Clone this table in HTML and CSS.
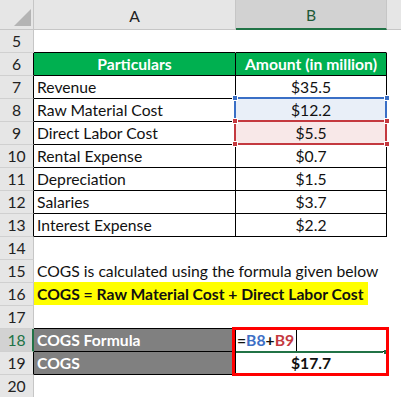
FILE: index.html
```html
<!DOCTYPE html>
<html>
<head>
<meta charset="utf-8">
<link rel="stylesheet" href="styles.css">
</head>
<body>
<div class="sheet">
  <div class="hdr">
    <div class="corner"><svg width="17" height="17" viewBox="0 0 17 17"><polygon points="17,0 17,17 0,17" fill="#b4b4b4"/></svg></div>
    <div class="ch ca">A</div>
    <div class="ch cb">B</div>
    <div class="ch rest"></div>
  </div>

  <div class="row"><div class="rh">5</div><div class="c a bb"></div><div class="c b bb"></div></div>
  <div class="row"><div class="rh tb">6</div><div class="c a t green">Particulars</div><div class="c b t green">Amount (in million)</div></div>
  <div class="row"><div class="rh tb">7</div><div class="c a t">Revenue</div><div class="c b t num">$35.5</div></div>
  <div class="row"><div class="rh tb">8</div><div class="c a t">Raw Material Cost</div><div class="c b t num blue-fill">$12.2</div></div>
  <div class="row"><div class="rh tb">9</div><div class="c a t">Direct Labor Cost</div><div class="c b t num red-fill">$5.5</div></div>
  <div class="row"><div class="rh tb">10</div><div class="c a t">Rental Expense</div><div class="c b t num">$0.7</div></div>
  <div class="row"><div class="rh tb">11</div><div class="c a t">Depreciation</div><div class="c b t num">$1.5</div></div>
  <div class="row"><div class="rh tb">12</div><div class="c a t">Salaries</div><div class="c b t num">$3.7</div></div>
  <div class="row"><div class="rh tb">13</div><div class="c a t">Interest Expense</div><div class="c b t num">$2.2</div></div>
  <div class="row"><div class="rh">14</div><div class="c a"></div><div class="c b"></div></div>
  <div class="row"><div class="rh">15</div><div class="c a over">COGS is calculated using the formula given below</div><div class="c b"></div></div>
  <div class="row"><div class="rh">16</div><div class="c a over"><span class="hl">COGS = Raw Material Cost + Direct Labor Cost</span></div><div class="c b"></div></div>
  <div class="row"><div class="rh">17</div><div class="c a bb"></div><div class="c b bb"></div></div>
  <div class="row"><div class="rh tb act">18</div><div class="c a t gray">COGS Formula</div><div class="c b t formula">=<span class="fb">B8</span>+<span class="fr">B9</span><span class="caret"></span></div></div>
  <div class="row"><div class="rh tb">19</div><div class="c a t gray">COGS</div><div class="c b t num bold">$17.7</div></div>
  <div class="row"><div class="rh">20</div><div class="c a"></div><div class="c b"></div></div>

  <div class="sel-blue"></div>
  <div class="sel-red"></div>
  <span class="hdl hb" style="left:232px;top:95px"></span>
  <span class="hdl hb" style="left:384px;top:95px"></span>
  <span class="hdl hr" style="left:232px;top:118px"></span>
  <span class="hdl hr" style="left:384px;top:118px"></span>
  <span class="hdl hr" style="left:232px;top:141px"></span>
  <span class="hdl hr" style="left:384px;top:141px"></span>
  <div class="edit-line"></div>
  <div class="edit-sq"></div>
  <div class="redbox"></div>
</div>
</body>
</html>
```

FILE: styles.css
```css
html, body {
  margin: 0;
  padding: 0;
  background: #ffffff;
}
.sheet {
  position: relative;
  width: 401px;
  height: 397px;
  overflow: hidden;
  font-family: Lato, "Noto Sans", sans-serif;
  font-size: 15.7px;
  color: #111;
}
.hdr {
  display: flex;
  height: 30px;
  background: #e6e6e6;
}
.corner {
  width: 34px;
  box-sizing: border-box;
  border-right: 1px solid #c6c6c6;
  border-bottom: 1px solid #c6c6c6;
  display: flex;
  align-items: flex-end;
  justify-content: flex-end;
  padding: 0 2px 3px 0;
}
.ch {
  box-sizing: border-box;
  border-right: 1px solid #c6c6c6;
  border-bottom: 1px solid #c6c6c6;
  display: flex;
  align-items: center;
  justify-content: center;
  color: #222;
  padding-top: 2px;
}
.ca { width: 202px; }
.cb {
  width: 151px;
  background: #d2d2d2;
  color: #1e5a38;
  border-bottom: 2px solid #217346;
}
.ch.rest { flex: 1; border-right: 0; }

.row {
  display: flex;
  height: 23px;
}
.rh {
  width: 34px;
  flex: none;
  box-sizing: border-box;
  border-right: 1px solid #c6c6c6;
  border-bottom: 1px solid #d0d0d0;
  background: #e6e6e6;
  display: flex;
  align-items: flex-end;
  justify-content: center;
  padding-bottom: 1px;
  line-height: 20px;
  color: #222;
}
.rh.tb { border-right-color: #000; }
.rh.act {
  border-right: 2px solid #217346;
  background: #d2d2d2;
  color: #217346;
  padding-left: 1px;
}
.c {
  flex: none;
  box-sizing: border-box;
  border-right: 1px solid transparent;
  border-bottom: 1px solid transparent;
  display: flex;
  align-items: flex-end;
  padding: 0 0 1px 3px;
  line-height: 20px;
  white-space: nowrap;
}
.a { width: 202px; }
.b { width: 151px; }
.bb { border-bottom-color: #000; }
.t { border-bottom-color: #000; border-right-color: #000; }
.over { overflow: visible; }
.num { justify-content: center; padding-left: 0; }
.bold { font-weight: 700; }
.green {
  background: #00b050;
  color: #fff;
  font-weight: 700;
  justify-content: center;
  padding-left: 0;
}
.gray {
  background: #808080;
  color: #fff;
  font-weight: 700;
}
.blue-fill { background: #e9eff8; }
.red-fill { background: #f8e8e8; }
.hl {
  flex: none;
  width: 334px;
  height: 23px;
  margin: 0 0 -1px -3px;
  padding: 0 0 1px 3px;
  box-sizing: border-box;
  background: #ffff00;
  font-weight: 700;
  display: flex;
  align-items: flex-end;
}
.formula {
  font-weight: 700;
  padding-left: 1px;
  align-items: flex-end;
}
.formula span { line-height: 20px; }
.fb { color: #3d6fc6; }
.fr { color: #c4393f; }
.caret {
  display: inline-block;
  width: 1px;
  height: 21px;
  background: #000;
  margin-left: 2px;
  margin-bottom: -1px;
}

.sel-blue {
  position: absolute;
  left: 234px;
  top: 97px;
  width: 153px;
  height: 25px;
  box-sizing: border-box;
  border: 2px solid #3a6fc6;
  border-bottom: 0;
}
.sel-red {
  position: absolute;
  left: 234px;
  top: 120px;
  width: 153px;
  height: 25px;
  box-sizing: border-box;
  border: 2px solid #c4393f;
}
.hdl {
  position: absolute;
  width: 6px;
  height: 6px;
  box-sizing: border-box;
  border: 1px solid #fff;
}
.hb { background: #3a6fc6; }
.hr { background: #c4393f; }
.edit-line {
  position: absolute;
  left: 236px;
  top: 351px;
  width: 147px;
  height: 2px;
  background: #217346;
}
.edit-sq {
  position: absolute;
  left: 384px;
  top: 350px;
  width: 3px;
  height: 4px;
  background: #217346;
}
.redbox {
  position: absolute;
  left: 232px;
  top: 327px;
  width: 157px;
  height: 49px;
  box-sizing: border-box;
  border: 3px solid #ff0000;
}
```
